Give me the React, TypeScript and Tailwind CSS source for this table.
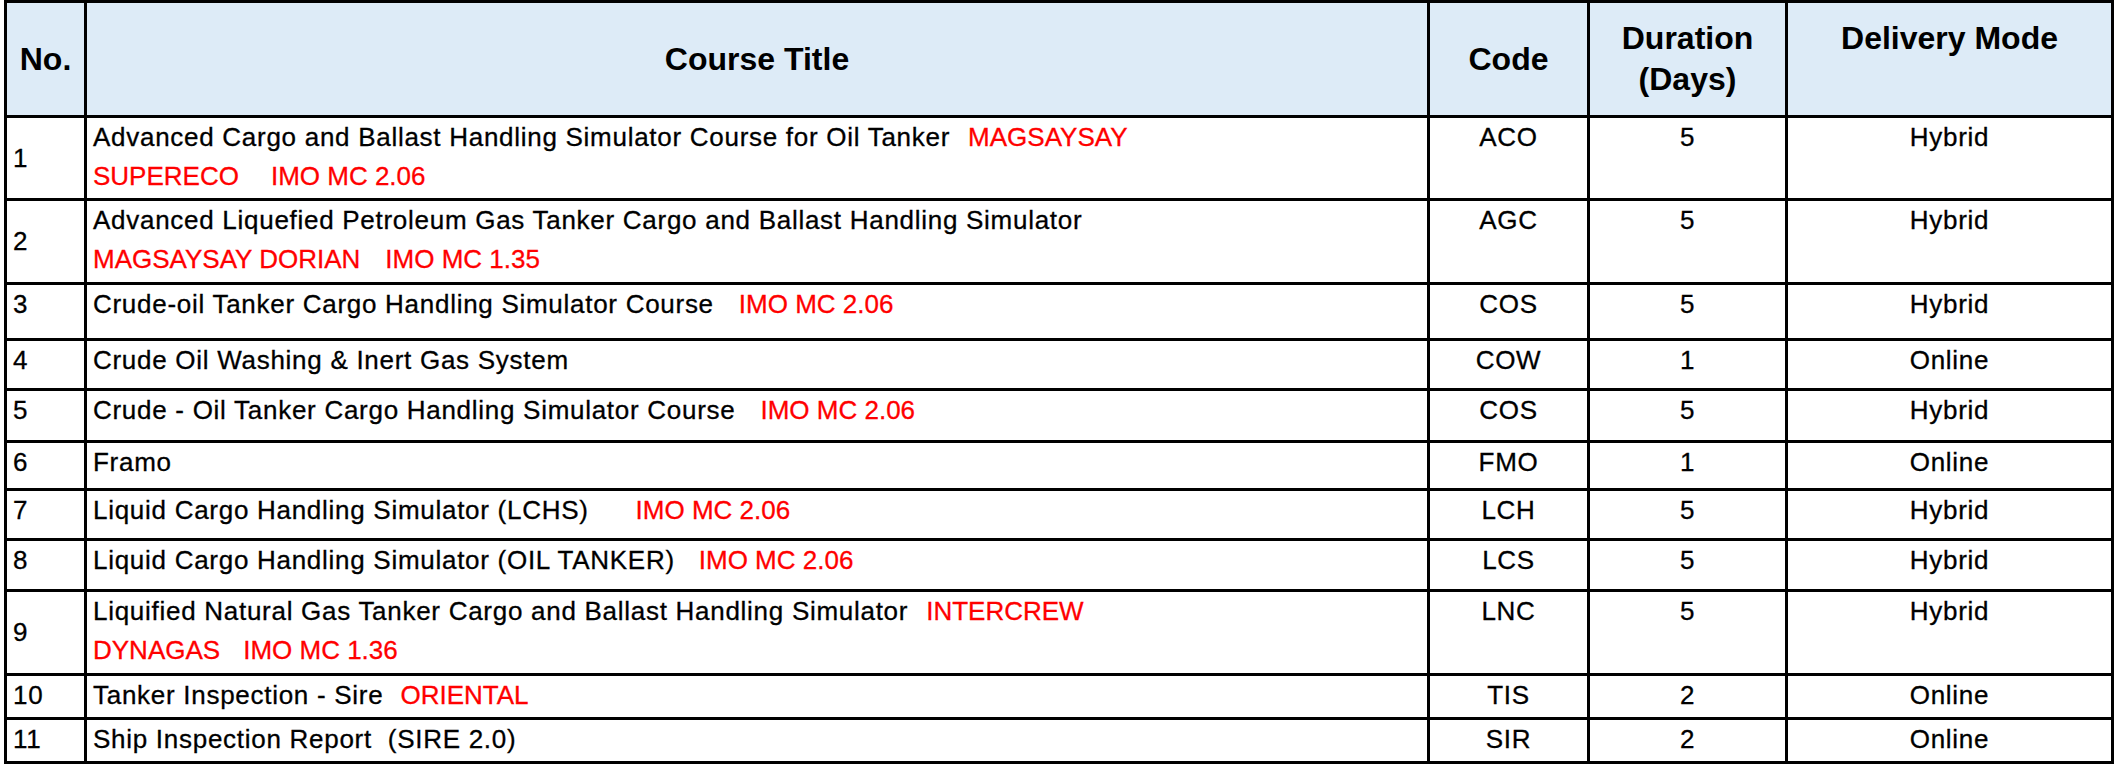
import * as React from "react";

type Seg = { text: string; red?: boolean; gap?: string };

type Course = {
  no: string;
  lines: Seg[][];
  code: string;
  days: string;
  mode: "Hybrid" | "Online";
};

const COURSES: Course[] = [
  {
    no: "1",
    lines: [
      [
        { text: "Advanced Cargo and Ballast Handling Simulator Course for Oil Tanker" },
        { text: "MAGSAYSAY", red: true, gap: "ml-[18px]" },
      ],
      [
        { text: "SUPERECO", red: true },
        { text: "IMO MC 2.06", red: true, gap: "ml-[32px]" },
      ],
    ],
    code: "ACO",
    days: "5",
    mode: "Hybrid",
  },
  {
    no: "2",
    lines: [
      [{ text: "Advanced Liquefied Petroleum Gas Tanker Cargo and Ballast Handling Simulator" }],
      [
        { text: "MAGSAYSAY DORIAN", red: true },
        { text: "IMO MC 1.35", red: true, gap: "ml-[25px]" },
      ],
    ],
    code: "AGC",
    days: "5",
    mode: "Hybrid",
  },
  {
    no: "3",
    lines: [
      [
        { text: "Crude-oil Tanker Cargo Handling Simulator Course" },
        { text: "IMO MC 2.06", red: true, gap: "ml-[25px]" },
      ],
    ],
    code: "COS",
    days: "5",
    mode: "Hybrid",
  },
  {
    no: "4",
    lines: [[{ text: "Crude Oil Washing & Inert Gas System" }]],
    code: "COW",
    days: "1",
    mode: "Online",
  },
  {
    no: "5",
    lines: [
      [
        { text: "Crude - Oil Tanker Cargo Handling Simulator Course" },
        { text: "IMO MC 2.06", red: true, gap: "ml-[25px]" },
      ],
    ],
    code: "COS",
    days: "5",
    mode: "Hybrid",
  },
  {
    no: "6",
    lines: [[{ text: "Framo" }]],
    code: "FMO",
    days: "1",
    mode: "Online",
  },
  {
    no: "7",
    lines: [
      [
        { text: "Liquid Cargo Handling Simulator (LCHS)" },
        { text: "IMO MC 2.06", red: true, gap: "ml-[47px]" },
      ],
    ],
    code: "LCH",
    days: "5",
    mode: "Hybrid",
  },
  {
    no: "8",
    lines: [
      [
        { text: "Liquid Cargo Handling Simulator (OIL TANKER)" },
        { text: "IMO MC 2.06", red: true, gap: "ml-[24px]" },
      ],
    ],
    code: "LCS",
    days: "5",
    mode: "Hybrid",
  },
  {
    no: "9",
    lines: [
      [
        { text: "Liquified Natural Gas Tanker Cargo and Ballast Handling Simulator" },
        { text: "INTERCREW", red: true, gap: "ml-[18px]" },
      ],
      [
        { text: "DYNAGAS", red: true },
        { text: "IMO MC 1.36", red: true, gap: "ml-[23px]" },
      ],
    ],
    code: "LNC",
    days: "5",
    mode: "Hybrid",
  },
  {
    no: "10",
    lines: [
      [
        { text: "Tanker Inspection - Sire" },
        { text: "ORIENTAL", red: true, gap: "ml-[17px]" },
      ],
    ],
    code: "TIS",
    days: "2",
    mode: "Online",
  },
  {
    no: "11",
    lines: [[{ text: "Ship Inspection Report  (SIRE 2.0)" }]],
    code: "SIR",
    days: "2",
    mode: "Online",
  },
];

const head =
  "bg-[#ddebf7] font-['Liberation_Sans',Arial,sans-serif] text-[32px] font-bold leading-[41px]";
const body =
  "bg-white font-['Liberation_Sans',Arial,sans-serif] text-[26px] leading-[39px] tracking-[0.72px] [-webkit-text-stroke:0.3px_currentColor]";

export default function App() {
  return (
    <div className="min-h-screen bg-white pl-[4px] text-black">
      <div className="grid w-fit grid-cols-[77px_1340px_157px_195px_323px] grid-rows-[112px_80px_81px_53px_47px_49px_45px_47px_48px_81px_41px_41px] gap-[3px] bg-black p-[3px]">
        {/* Header */}
        <div className={`${head} flex items-center justify-center`}>No.</div>
        <div className={`${head} flex items-center justify-center`}>Course Title</div>
        <div className={`${head} flex items-center justify-center`}>Code</div>
        <div className={`${head} flex flex-col items-center justify-center text-center`}>
          <span>Duration</span>
          <span>(Days)</span>
        </div>
        <div className={`${head} flex flex-col items-center justify-center text-center`}>
          <span>Delivery Mode</span>
          <span>&nbsp;</span>
        </div>

        {/* Rows */}
        {COURSES.map((c) => (
          <React.Fragment key={c.no}>
            <div className={`${body} pl-[6px] ${c.lines.length > 1 ? "flex items-center" : ""}`}>
              {c.no}
            </div>
            <div className={`${body} pl-[6px]`}>
              {c.lines.map((line, i) => (
                <div key={i} className="whitespace-pre">
                  {line.map((seg, j) => (
                    <span
                      key={j}
                      className={`${seg.gap ?? ""} ${seg.red ? "tracking-normal text-[#ff0000]" : ""}`}
                    >
                      {seg.text}
                    </span>
                  ))}
                </div>
              ))}
            </div>
            <div className={`${body} text-center`}>{c.code}</div>
            <div className={`${body} text-center`}>{c.days}</div>
            <div className={`${body} text-center`}>{c.mode}</div>
          </React.Fragment>
        ))}
      </div>
    </div>
  );
}
